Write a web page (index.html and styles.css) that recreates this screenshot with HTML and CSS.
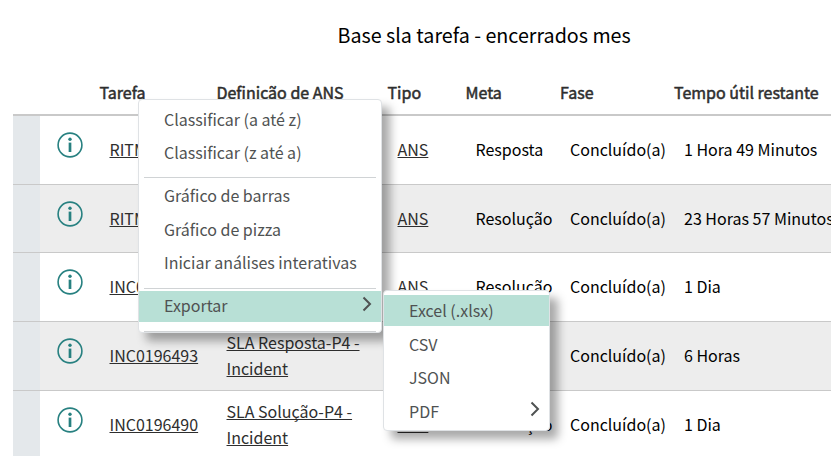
FILE: index.html
```html
<!DOCTYPE html>
<html lang="pt-BR">
<head>
<meta charset="utf-8">
<title>Base sla tarefa - encerrados mes</title>
<link rel="stylesheet" href="styles.css">
</head>
<body>
<svg class="defs" width="0" height="0">
  <symbol id="info" viewBox="0 0 26 26"><circle cx="13" cy="13" r="11.9" fill="none" stroke="currentColor" stroke-width="1.6"/><circle cx="13" cy="7.200" r="1.7" fill="currentColor"/><path d="M13 10.600v9.400" stroke="currentColor" stroke-width="2.700"/></symbol>
  <symbol id="chevron" viewBox="0 0 10 16"><path d="M1.500 1.500 8 8l-6.500 6.500" fill="none" stroke="currentColor" stroke-width="2"/></symbol>
</svg>
<h1 class="title">Base sla tarefa - encerrados mes</h1>
<main class="table">
  <div class="row head"><span></span><span></span><span>Tarefa</span><span>Definicão de ANS</span><span>Tipo</span><span>Meta</span><span>Fase</span><span>Tempo útil restante</span></div>
  <div class="row"><i class="strip"></i><svg class="info"><use href="#info"/></svg><a>RITM</a><a></a><a>ANS</a><span>Resposta</span><span>Concluído(a)</span><span>1 Hora 49 Minutos</span></div>
  <div class="row alt short"><i class="strip"></i><svg class="info"><use href="#info"/></svg><a>RITM</a><a></a><a>ANS</a><span>Resolução</span><span>Concluído(a)</span><span>23 Horas 57 Minutos</span></div>
  <div class="row"><i class="strip"></i><svg class="info"><use href="#info"/></svg><a>INC0</a><a></a><a>ANS</a><span>Resolução</span><span>Concluído(a)</span><span>1 Dia</span></div>
  <div class="row alt"><i class="strip"></i><svg class="info"><use href="#info"/></svg><a>INC0196493</a><a>SLA Resposta-P4 -<br>Incident</a><a></a><span></span><span>Concluído(a)</span><span>6 Horas</span></div>
  <div class="row short"><i class="strip"></i><svg class="info"><use href="#info"/></svg><a>INC0196490</a><a>SLA Solução-P4 -<br>Incident</a><a>ANS</a><span>Resolução</span><span>Concluído(a)</span><span>1 Dia</span></div>
</main>
<nav class="menu main-menu">
  <div class="item">Classificar (a até z)</div>
  <div class="item">Classificar (z até a)</div>
  <hr class="first">
  <div class="item">Gráfico de barras</div>
  <div class="item">Gráfico de pizza</div>
  <div class="item">Iniciar análises interativas</div>
  <hr class="second">
  <div class="item active">Exportar<svg class="chevron"><use href="#chevron"/></svg></div>
  <hr class="last">
</nav>
<nav class="menu sub-menu">
  <div class="item active">Excel (.xlsx)</div>
  <div class="item">CSV</div>
  <div class="item">JSON</div>
  <div class="item">PDF<svg class="chevron"><use href="#chevron"/></svg></div>
</nav>
</body>
</html>
```
FILE: styles.css
```css
* { box-sizing: border-box; }
html, body { height: 456px; overflow: hidden; }
body {
  margin: 0;
  position: relative;
  background: #fff;
  color: #000;
  font: 16px/26px "Noto Sans CJK SC", "Noto Sans", sans-serif;
  white-space: nowrap;
}
.defs { position: absolute; }
.title {
  margin: 0;
  height: 72px;
  padding: 20px 0 0 337.500px;
  font-size: 19.700px;
  line-height: 30px;
  font-weight: 400;
}
.table { margin-left: 13px; overflow: hidden; }
.row {
  display: grid;
  grid-template-columns: 27px 59.500px 117px 171px 78px 94.500px 114px 1fr;
  align-items: center;
  height: 69px;
  border-bottom: 1px solid #c9c9c9;
}
.row.short { height: 68px; }
.row.alt { background: #ededed; }
.row.head {
  height: 44px;
  padding-bottom: 2px;
  border-bottom: 2px solid #c9c9c9;
  color: #2e2e2e;
  -webkit-text-stroke: 0.5px #2e2e2e;
}
.row:not(.head) > a, .row:not(.head) > span { padding: 0 0 2px 10px; }
.row a {
  color: #2e2e2e;
  text-decoration: underline 1px;
  text-underline-offset: 1px;
  text-decoration-skip-ink: none;
}
.strip { align-self: stretch; background: #e4e8eb; }
.info { width: 26px; height: 26px; margin: 0 0 10px 17px; color: #278080; }
.menu {
  position: absolute;
  display: flex;
  flex-direction: column;
  background: #fff;
  border: 1px solid #dfe2e5;
  border-radius: 4px;
  color: #4f5252;
  box-shadow: 8px 8px 10px rgba(0, 0, 0, 0.34);
}
.main-menu { left: 138px; top: 99px; width: 244px; height: 234px; padding-top: 4px; }
.sub-menu { left: 383px; top: 290px; width: 167px; height: 141px; padding-top: 4px; }
.item {
  display: flex;
  flex: none;
  align-items: center;
  justify-content: space-between;
  height: 31px;
  margin-bottom: 2.700px;
  padding: 0 9px 2px 25px;
}
.sub-menu .item.active { margin-bottom: 3px; }
.item.active { background: #b8e0d6; }
.menu hr { flex: none; height: 1px; border: 0; margin: 2px 5px; background: #d0d3d5; }
.menu hr.first { margin: 5.600px 5px 2.600px; }
.menu hr.second { margin-top: 6.300px; }
.menu hr.last { margin-top: 6.300px; }
.chevron { width: 10px; height: 16px; margin-bottom: 3px; }
```
